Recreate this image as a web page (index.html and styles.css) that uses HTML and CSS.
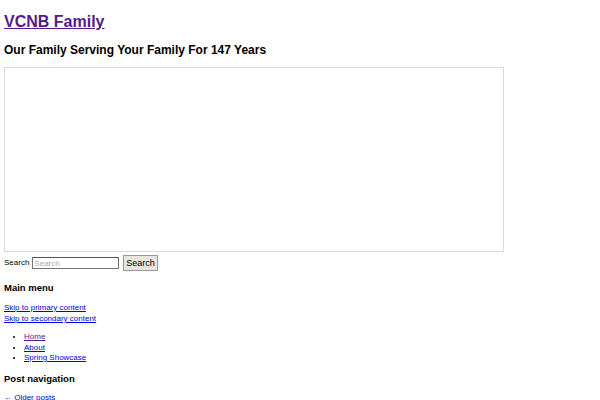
FILE: index.html
```html
<!DOCTYPE html>
<html>
<head>
<meta charset="utf-8">
<link rel="stylesheet" href="styles.css">
</head>
<body>
<div class="page">
  <h1 class="site-title"><a href="#" class="visited">VCNB Family</a></h1>
  <h2 class="tagline">Our Family Serving Your Family For 147 Years</h2>
  <div class="frame"></div>
  <form class="search">
    <label class="search-label">Search</label>
    <input class="search-input" type="text" placeholder="Search">
    <button class="search-btn" type="button">Search</button>
  </form>
  <h3 class="section-title">Main menu</h3>
  <div class="skip"><a href="#">Skip to primary content</a></div>
  <div class="skip"><a href="#">Skip to secondary content</a></div>
  <ul class="menu">
    <li><a href="#" class="visited">Home</a></li>
    <li><a href="#">About</a></li>
    <li><a href="#">Spring Showcase</a></li>
  </ul>
  <h3 class="section-title post-nav">Post navigation</h3>
  <div class="older"><a href="#">← Older posts</a></div>
</div>
</body>
</html>
```
FILE: styles.css
```css
html, body {
  margin: 0;
  padding: 0;
  background: #fff;
}
.page {
  padding: 4px;
  font-family: "Liberation Sans", Arial, sans-serif;
  font-size: 8px;
  line-height: 10.5px;
  color: #000;
}
a {
  color: #0000ee;
}
a.visited {
  color: #551a8b;
}
.site-title {
  font-size: 16px;
  line-height: 18px;
  margin: 9px 0 0 0;
  font-weight: bold;
}
.tagline {
  font-size: 12px;
  line-height: 14px;
  margin: 12px 0 0 0;
  font-weight: bold;
}
.frame {
  width: 498px;
  height: 183px;
  border: 1px solid #d9d9d9;
  margin-top: 10px;
}
.search {
  display: flex;
  align-items: center;
  height: 16px;
  margin-top: 3px;
}
.search-label {
  margin-right: 3px;
}
.search-input {
  width: 83px;
  height: 10px;
  padding: 0 1px;
  margin: 0;
  border: 1px solid #767676;
  border-top-color: #555;
  font-family: "Liberation Sans", Arial, sans-serif;
  font-size: 8px;
  box-sizing: content-box;
}
.search-input::placeholder {
  color: #aaa;
}
.search-btn {
  margin: 0 0 0 4px;
  padding: 0 2px;
  height: 16px;
  font-family: "Liberation Sans", Arial, sans-serif;
  font-size: 9px;
  background: #e8e5df;
  border: 1px solid #999;
  border-radius: 0;
}
.section-title {
  font-size: 9.5px;
  line-height: 11px;
  margin: 11px 0 9px 0;
  font-weight: bold;
}
.skip {
  line-height: 11px;
}
.menu {
  margin: 8px 0 0 0;
  padding-left: 20px;
  line-height: 10.5px;
}
.post-nav {
  margin-top: 9px;
}
.older {
  line-height: 10px;
}
```
